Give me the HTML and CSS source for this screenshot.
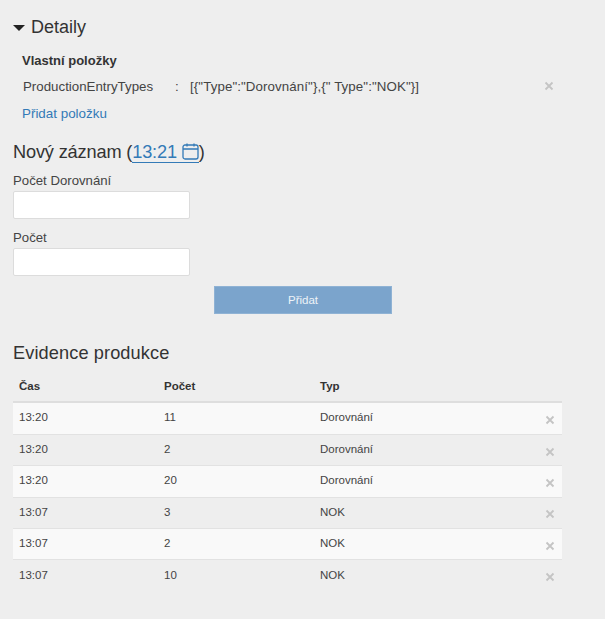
FILE: index.html
```html
<!DOCTYPE html>
<html lang="cs">
<head>
<meta charset="utf-8">
<title>Detail</title>
<link rel="stylesheet" href="styles.css">
</head>
<body>
<main class="page">
  <h2 class="detail-head"><span class="caret"></span>Detaily</h2>
  <section class="custom">
    <h3 class="custom-title">Vlastní položky</h3>
    <div class="custom-row">
      <span class="custom-key">ProductionEntryTypes</span>
      <span class="custom-colon">:</span>
      <span class="custom-value">[{"Type":"Dorovnání"},{" Type":"NOK"}]</span>
      <svg class="x x-top" viewBox="0 0 10 10"><path d="M1.5 1.5l7 7M8.5 1.5l-7 7"/></svg>
    </div>
    <a class="add-link" href="#">Přidat položku</a>
  </section>
  <h2 class="heading new-head">Nový záznam (<a class="time" href="#">13:21 <svg class="cal" viewBox="0 0 17 17"><rect x="1" y="2" width="15" height="14" rx="2"/><path d="M1 6h15M5 .5v3M12 .5v3"/></svg></a>)</h2>
  <form class="form">
    <label class="lbl" for="a">Počet Dorovnání</label>
    <input class="inp" id="a" type="text">
    <label class="lbl lbl-2" for="b">Počet</label>
    <input class="inp" id="b" type="text">
    <div class="btn-wrap"><button class="btn" type="button">Přidat</button></div>
  </form>
  <h2 class="heading ev-head">Evidence produkce</h2>
  <table class="tbl">
    <thead>
      <tr><th class="c1">Čas</th><th class="c2">Počet</th><th>Typ</th><th class="c4"></th></tr>
    </thead>
    <tbody>
      <tr><td>13:20</td><td>11</td><td>Dorovnání</td><td class="c4"><svg class="x" viewBox="0 0 10 10"><path d="M1.5 1.5l7 7M8.5 1.5l-7 7"/></svg></td></tr>
      <tr><td>13:20</td><td>2</td><td>Dorovnání</td><td class="c4"><svg class="x" viewBox="0 0 10 10"><path d="M1.5 1.5l7 7M8.5 1.5l-7 7"/></svg></td></tr>
      <tr><td>13:20</td><td>20</td><td>Dorovnání</td><td class="c4"><svg class="x" viewBox="0 0 10 10"><path d="M1.5 1.5l7 7M8.5 1.5l-7 7"/></svg></td></tr>
      <tr><td>13:07</td><td>3</td><td>NOK</td><td class="c4"><svg class="x" viewBox="0 0 10 10"><path d="M1.5 1.5l7 7M8.5 1.5l-7 7"/></svg></td></tr>
      <tr><td>13:07</td><td>2</td><td>NOK</td><td class="c4"><svg class="x" viewBox="0 0 10 10"><path d="M1.5 1.5l7 7M8.5 1.5l-7 7"/></svg></td></tr>
      <tr><td>13:07</td><td>10</td><td>NOK</td><td class="c4"><svg class="x" viewBox="0 0 10 10"><path d="M1.5 1.5l7 7M8.5 1.5l-7 7"/></svg></td></tr>
    </tbody>
  </table>
</main>
</body>
</html>
```
FILE: styles.css
```css
html, body { margin: 0; padding: 0; background: #eeeeee; }
body { font-family: "Liberation Sans", Arial, sans-serif; color: #333333; font-size: 12px; height: 619px; overflow: hidden; }
.page { padding: 17px 0 0 13px; }
.detail-head { margin: 0; font-size: 18px; font-weight: 400; line-height: 20px; display: flex; align-items: center; }
.caret { width: 0; height: 0; border-left: 6px solid transparent; border-right: 6px solid transparent; border-top: 6px solid #222; margin-right: 6px; margin-top: 2px; }
.custom { padding: 15px 0 0 9px; }
.custom-title { margin: 0; font-size: 13px; font-weight: 700; line-height: 18px; color: #333; }
.custom-row { position: relative; display: flex; align-items: center; height: 18px; margin-top: 7px; font-size: 13.3px; color: #444; width: 530px; }
.custom-key { width: 153px; padding-left: 1px; box-sizing: border-box; }
.custom-colon { width: 15px; }
.custom-value { white-space: nowrap; letter-spacing: 0.1px; }
.x { width: 10px; height: 10px; fill: none; stroke: #c4c4c4; stroke-width: 1.8; display: block; }
.x-top { margin-left: auto; margin-right: -2px; }
.add-link { display: block; margin-top: 10px; font-size: 13.4px; line-height: 18px; color: #337ab7; text-decoration: none; }
.heading { margin: 0; font-size: 18.2px; font-weight: 400; line-height: 22px; color: #333; }
.new-head { margin-top: 18px; letter-spacing: -0.16px; }
.time { color: #337ab7; text-decoration: none; border-bottom: 1px solid #337ab7; }
.cal { width: 17px; height: 17px; fill: none; stroke: #337ab7; stroke-width: 1.3; vertical-align: -2px; }
.form { margin-top: 9px; }
.lbl { display: block; font-size: 13.2px; line-height: 17px; color: #444; }
.lbl-2 { margin-top: 10px; }
.inp { display: block; box-sizing: border-box; width: 177px; height: 28px; margin: 2px 0 0; padding: 0 6px; background: #fff; border: 1px solid #dcdcdc; border-radius: 2px; outline: none; }
.btn-wrap { display: flex; justify-content: center; width: 580px; margin-top: 10px; }
.btn { box-sizing: border-box; width: 178px; height: 28px; background: #7ba4cc; border: 1px solid #8fb2d4; color: #eef3f8; font: 400 11.5px "Liberation Sans", Arial, sans-serif; padding: 0; }
.ev-head { margin-top: 28px; letter-spacing: 0.1px; }
.tbl { width: 549px; margin-top: 7px; border-collapse: collapse; table-layout: fixed; color: #444; }
.tbl th { height: 30px; padding: 0 6px; text-align: left; font-size: 11.5px; font-weight: 700; border-bottom: 2px solid #dedede; color: #333; }
.tbl tbody::before { content: ""; display: table-row; height: 1px; }
.tbl td { height: 30px; padding: 0 6px 2px; font-size: 11.5px; border-bottom: 1px solid #e2e2e2; box-sizing: border-box; }
.tbl tbody tr { height: 31.4px; }
.tbl tbody tr:nth-child(odd) { background: #f9f9f9; }
.tbl tbody tr:last-child td { border-bottom: 0; }
.c1 { width: 133px; }
.c2 { width: 144px; }
.c4 { width: 20px; }
.tbl td.c4 { padding: 3px 7px 0 0; }
.tbl .x { margin-left: auto; }
```
